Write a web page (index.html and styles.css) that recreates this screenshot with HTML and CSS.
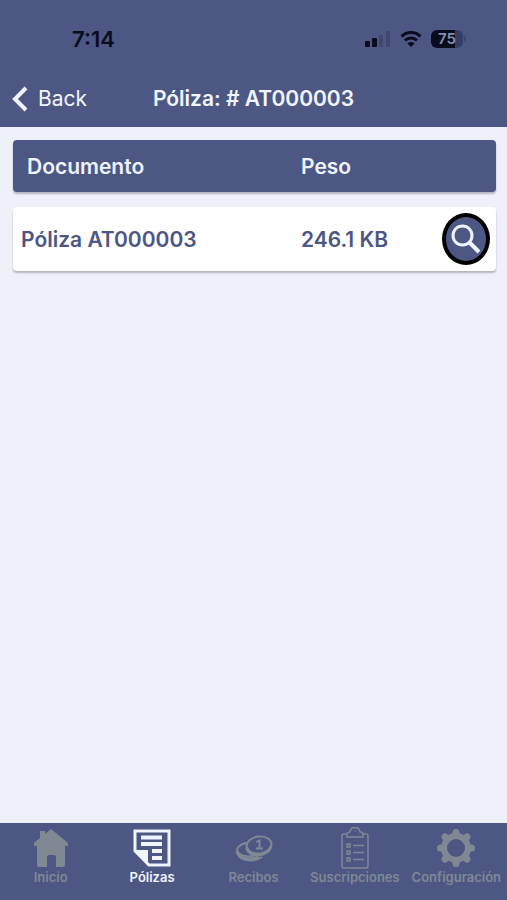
FILE: index.html
```html
<!DOCTYPE html>
<html lang="es">
<head>
<meta charset="utf-8">
<meta name="viewport" content="width=device-width, initial-scale=1">
<title>Póliza: # AT000003</title>
<link rel="stylesheet" href="styles.css">
</head>
<body>
<header class="top">
  <div class="status">
    <span class="time">7:14</span>
    <div class="indicators">
      <svg class="signal" viewBox="0 0 26 18" aria-hidden="true">
        <rect x="0" y="11" width="5" height="6" rx="1"/>
        <rect x="7" y="8" width="5" height="9" rx="1"/>
        <rect class="faint" x="14" y="5" width="4" height="12" rx="1"/>
        <rect class="faint" x="21" y="1" width="4" height="16" rx="1"/>
      </svg>
      <svg class="wifi" viewBox="0 0 22 18" aria-hidden="true">
        <path d="M1.500 6.500A13.500 13.500 0 0 1 20.500 6.500" />
        <path d="M5 10.500A8.500 8.500 0 0 1 17 10.500"/>
        <path class="dot" d="M7.500 13.500A5 5 0 0 1 14.500 13.500L11 17Z"/>
      </svg>
      <span class="battery"><span class="level">75</span></span>
    </div>
  </div>
  <nav class="bar">
    <a class="back" href="#">
      <svg viewBox="0 0 16 26" aria-hidden="true"><path d="M14 2L3 13L14 24"/></svg>
      <span>Back</span>
    </a>
    <h1>Póliza: # AT000003</h1>
  </nav>
</header>
<main>
  <table class="docs">
    <thead>
      <tr><th scope="col">Documento</th><th scope="col">Peso</th></tr>
    </thead>
    <tbody>
      <tr>
        <td>Póliza AT000003</td>
        <td>246.1 KB</td>
        <td class="action">
          <button type="button" class="view" aria-label="Ver documento">
            <svg viewBox="0 0 30 30" aria-hidden="true"><circle cx="11.500" cy="11.500" r="9.500"/><path class="handle" d="M18.500 18.500L28 28"/></svg>
          </button>
        </td>
      </tr>
    </tbody>
  </table>
</main>
<nav class="tabs">
  <a href="#">
    <svg viewBox="0 0 40 40" aria-hidden="true"><path class="fill" d="M9 3H14V6L20 1L37 15V18H3V15L9 10ZM6 18H34V37Q34 39 32 39H25V29Q25 27 23 27H18Q16 27 16 29V39H8Q6 39 6 37Z"/></svg>
    <span>Inicio</span>
  </a>
  <a href="#" class="active" aria-current="page">
    <svg viewBox="0 0 40 40" aria-hidden="true">
      <path class="frame" d="M3 3H37V37H17L3 23Z"/>
      <path class="fill" d="M2 22H16V38Z"/>
      <path class="lines" d="M9 9.500H30M9 16H30M20 23H30M20 30H30"/>
    </svg>
    <span>Pólizas</span>
  </a>
  <a href="#">
    <svg viewBox="0 0 40 40" aria-hidden="true">
      <path class="coin" d="M13 15C7 16 3 20 4 25C8 34 22 34 29 29M4 22C7 30 19 29 23 27"/>
      <ellipse class="coin" cx="26" cy="17" rx="12.500" ry="8.500" transform="rotate(-8 26 17)"/>
      <path class="rim" d="M14 20C15 30 36 29 38 18M5 26C9 32 20 32 26 29"/>
      <path class="digit" d="M23.500 14L26.500 12.500V20M23 20.500H30"/>
    </svg>
    <span>Recibos</span>
  </a>
  <a href="#">
    <svg viewBox="0 0 40 42" aria-hidden="true">
      <path class="thin" d="M12 7H9Q7 7 7 9V39Q7 41 9 41H31Q33 41 33 39V9Q33 7 31 7H28M12 10V7Q12 5 15 5Q16 0 20 0.700Q24 0 25 5Q28 5 28 7V10Z"/>
      <path class="thin" d="M19.500 4H20.500M12 17H15V20H12ZM12 24H15V27H12ZM12 31H15V34H12ZM18 18.500H29M18 25.500H29M18 32.500H29"/>
    </svg>
    <span>Suscripciones</span>
  </a>
  <a href="#">
    <svg viewBox="0 0 40 40" aria-hidden="true">
      <circle class="gear" cx="20" cy="20" r="12"/>
      <path class="teeth" d="M20 7V4.500M20 33V35.500M7 20H4.500M33 20H35.500M10.800 10.800L9 9M29.200 29.200L31 31M29.200 10.800L31 9M10.800 29.200L9 31"/>
    </svg>
    <span>Configuración</span>
  </a>
</nav>
</body>
</html>
```
FILE: styles.css
```css
* { box-sizing: border-box; }

body {
  margin: 0;
  min-height: 100vh;
  display: flex;
  flex-direction: column;
  background: #eef0fa;
  color: #4d5684;
  font-family: Inter, "Liberation Sans", sans-serif;
}

a { color: inherit; text-decoration: none; }

svg { display: block; fill: none; stroke: currentColor; }

.top { background: #4d5784; color: #f2f5ff; padding: 24px 0 8px; }

.status {
  display: flex;
  align-items: center;
  justify-content: space-between;
  height: 30px;
  padding: 0 44px 0 72px;
  color: #080c1c;
}

.time { font-size: 22px; font-weight: 600; }

.indicators { display: flex; align-items: center; gap: 9px; }
.signal { width: 26px; height: 18px; fill: currentColor; stroke: none; }
.faint { opacity: 0.2; }
.wifi { width: 22px; height: 18px; stroke-width: 3; }
.wifi .dot { fill: currentColor; stroke: none; }

.battery {
  position: relative;
  width: 32px;
  height: 18px;
  border-radius: 6px;
  background: linear-gradient(90deg, #080c1c 76%, #353e68 76%);
}
.battery::after {
  content: "";
  position: absolute;
  left: 33px;
  top: 6px;
  width: 2px;
  height: 6px;
  border-radius: 0 2px 2px 0;
  background: #3d4670;
}
.level {
  display: block;
  color: #8790b2;
  font-size: 15px;
  font-weight: 600;
  line-height: 18px;
  text-align: center;
}

.bar {
  display: grid;
  grid-template-columns: 1fr auto 1fr;
  align-items: center;
  height: 65px;
  padding: 10px 12px 0;
  padding-top: 24px;
}
.back { display: flex; align-items: center; gap: 10px; font-size: 21px; }
.back svg { width: 16px; height: 26px; stroke-width: 4; }
h1 { margin: 0; font-size: 21px; font-weight: 600; }

main { flex: 1; padding: 13px 11px 13px 13px; }

.docs, .docs thead, .docs tbody { display: block; }
.docs thead { margin-bottom: 15px; }
.docs tr {
  display: grid;
  grid-template-columns: 2fr 1fr 54px;
  align-items: center;
  border-radius: 4px;
  box-shadow: 0 2px 2px rgb(0 0 0 / 25%);
}
.docs th, .docs td { padding: 0 0 0 2px; text-align: left; font-size: 21px; font-weight: 600; }
.docs th:first-child { padding-left: 14px; }
.docs td:first-child { padding-left: 8px; }
.docs td.action { padding: 0; }
.docs thead tr { height: 52px; background: #4d5784; color: #eef4ff; }
.docs tbody tr { height: 64px; background: #fff; }

.view {
  display: grid;
  place-items: center;
  width: 48px;
  height: 52px;
  padding: 0;
  border: 4px solid #000;
  border-radius: 50%;
  background: #4d5784;
  color: #eef4ff;
}
.view svg { width: 30px; height: 30px; stroke-width: 3; }
.view .handle { stroke-width: 4; }

.tabs {
  display: grid;
  grid-template-columns: repeat(5, 1fr);
  height: 77px;
  padding-top: 4px;
  background: #4d5784;
  color: #808894;
}
.tabs a {
  display: flex;
  flex-direction: column;
  align-items: center;
  font-size: 13px;
  font-weight: 600;
  line-height: 16px;
}
.tabs svg { width: 40px; height: 42px; }
.tabs .active { color: #f0f4ff; }
.fill { fill: currentColor; stroke: none; }
.frame { stroke-width: 3; }
.lines { stroke-width: 4; }
.coin { stroke-width: 2; }
.rim { stroke-width: 3; }
.digit { stroke-width: 2; }
.thin { stroke-width: 1.5; }
.gear { stroke-width: 6; }
.teeth { stroke-width: 7; stroke-linecap: round; }
```
